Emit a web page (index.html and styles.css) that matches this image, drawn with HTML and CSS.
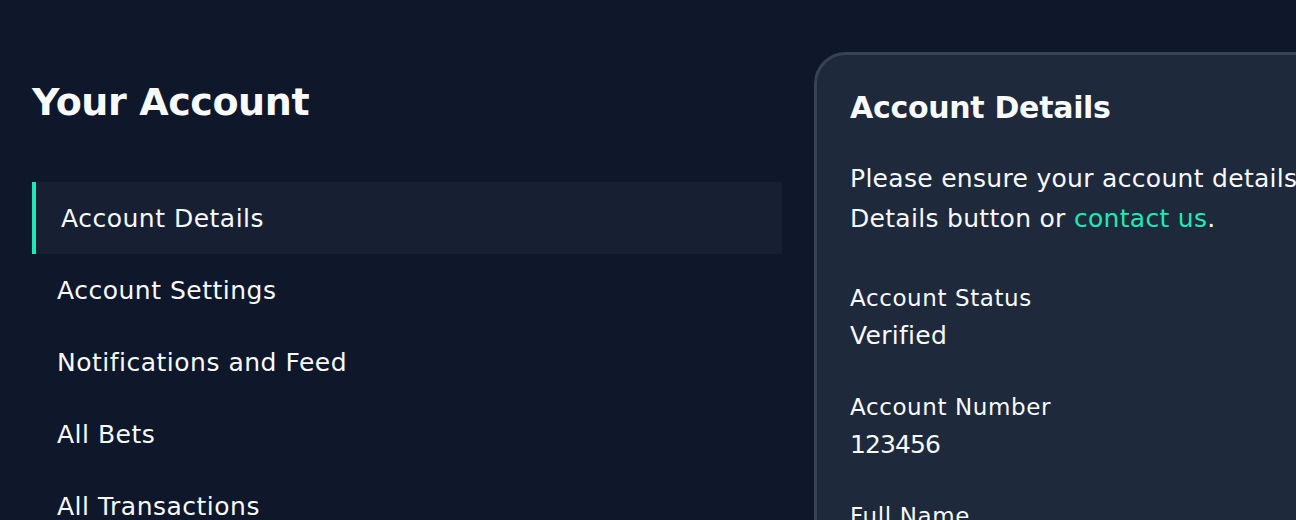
FILE: index.html
```html
<!DOCTYPE html>
<html lang="en">
<head>
<meta charset="utf-8">
<title>Your Account</title>
<link rel="stylesheet" href="styles.css">
</head>
<body>
<div class="page">
  <aside class="sidebar">
    <h1 class="title">Your Account</h1>
    <nav class="nav">
      <a class="nav-item active" href="#">Account Details</a>
      <a class="nav-item" href="#">Account Settings</a>
      <a class="nav-item" href="#">Notifications and Feed</a>
      <a class="nav-item" href="#">All Bets</a>
      <a class="nav-item" href="#">All Transactions</a>
    </nav>
  </aside>
  <section class="card">
    <h2 class="card-title">Account Details</h2>
    <p class="intro">Please ensure your account details are correct. To update them, use the Edit<br>Details button or <a class="link" href="#">contact us</a>.</p>
    <dl class="fields">
      <div class="field">
        <dt class="label">Account Status</dt>
        <dd class="value">Verified</dd>
      </div>
      <div class="field">
        <dt class="label">Account Number</dt>
        <dd class="value num">123456</dd>
      </div>
      <div class="field">
        <dt class="label">Full Name</dt>
        <dd class="value">John Smith</dd>
      </div>
    </dl>
  </section>
</div>
</body>
</html>
```

FILE: styles.css
```css
* { box-sizing: border-box; }
html, body { margin: 0; padding: 0; }
body {
  background: #0f172a;
  color: #f8fafc;
  font-family: "DejaVu Sans", "Inter", sans-serif;
  overflow: hidden;
  height: 520px;
}
.page {
  display: grid;
  grid-template-columns: 750px 1200px;
  column-gap: 32px;
  padding: 52px 0 0 32px;
  width: 2100px;
}
.sidebar { padding-top: 24px; }
.title {
  margin: 0 0 54px 0;
  font-size: 38px;
  font-weight: 700;
  line-height: 52px;
  letter-spacing: -0.4px;
}
.nav { display: flex; flex-direction: column; }
.nav-item {
  display: block;
  height: 72px;
  padding-top: 2px;
  line-height: 70px;
  padding-left: 25px;
  font-size: 25px;
  letter-spacing: 0.5px;
  color: #f8fafc;
  text-decoration: none;
  border-left: 4px solid transparent;
  margin-left: -4px;
  white-space: nowrap;
}
.nav-item.active {
  background: #172033;
  border-left-color: #1de9b6;
  margin-left: 0;
}
.card {
  background: #1e293b;
  border: 3px solid #354357;
  border-radius: 32px;
  padding: 31px 33px;
  min-height: 600px;
}
.card-title {
  margin: 0 0 29px 0;
  font-size: 30px;
  font-weight: 700;
  line-height: 44px;
  letter-spacing: -0.3px;
}
.intro {
  margin: 0 0 42px 0;
  font-size: 25px;
  letter-spacing: 0.3px;
  line-height: 40px;
  white-space: nowrap;
}
.link { color: #1de9b6; text-decoration: none; }
.fields { margin: 0; display: flex; flex-direction: column; gap: 36px; }
.field { display: flex; flex-direction: column; gap: 3px; }
.label { font-size: 23px; letter-spacing: 0.6px; line-height: 34px; }
.value { margin: 0; font-size: 25px; letter-spacing: 0.3px; line-height: 36px; }
.value.num { letter-spacing: -0.9px; }
```
